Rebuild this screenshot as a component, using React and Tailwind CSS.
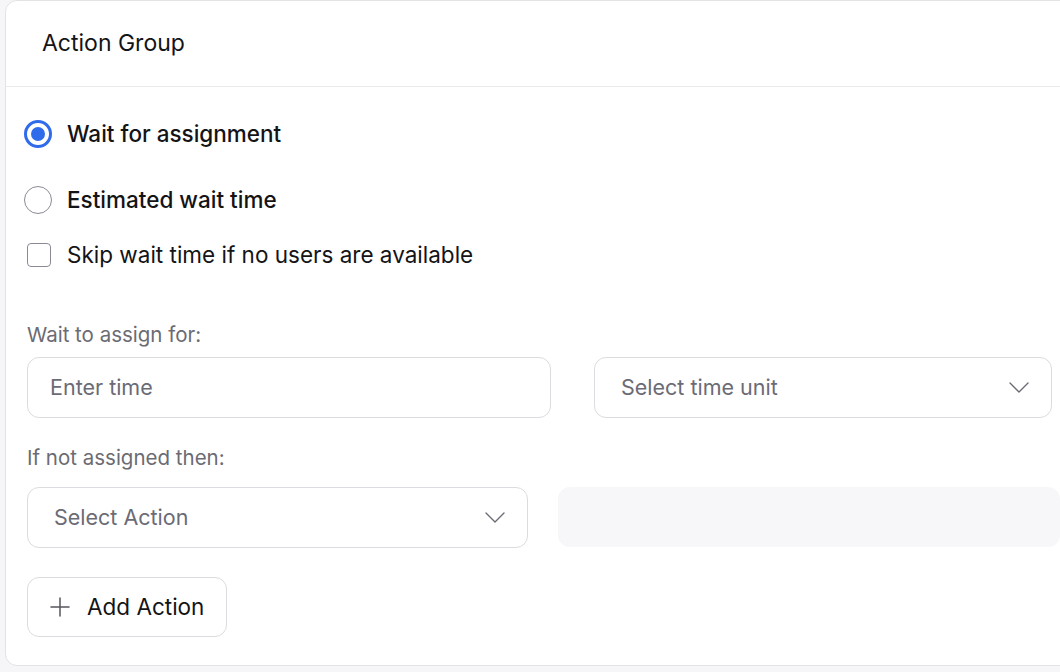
function Radio({ checked, label }) {
  return (
    <label className="flex h-[28px] items-center gap-[15px]">
      {checked ? (
        <span className="flex h-[28px] w-[28px] items-center justify-center rounded-full border-[3px] border-[#2f6bea]">
          <span className="h-[14px] w-[14px] rounded-full bg-[#2f6bea]" />
        </span>
      ) : (
        <span className="h-[28px] w-[28px] rounded-full border border-[#8a8a96] bg-white" />
      )}
      <span className="text-[22.5px] leading-none font-medium text-[#141416]">{label}</span>
    </label>
  );
}

function Chevron() {
  return (
    <svg width="20" height="11" viewBox="0 0 20 11" fill="none" className="text-[#6b6b76]">
      <path d="M1 1l9 9 9-9" stroke="currentColor" strokeWidth="1.4" strokeLinecap="round" strokeLinejoin="round" />
    </svg>
  );
}

function SelectBox({ placeholder, className }) {
  return (
    <div className={`flex h-[61px] items-center justify-between rounded-[12px] border border-[#dcdce0] bg-white pl-[26px] pr-[22px] ${className}`}>
      <span className="text-[21.5px] text-[#6b6b76]">{placeholder}</span>
      <Chevron />
    </div>
  );
}

export default function App() {
  return (
    <div className="h-[672px] w-[1060px] overflow-hidden bg-[#f6f6f8] pl-[5px]" style={{ fontFamily: 'Inter, "Noto Sans", sans-serif' }}>
      <div className="h-[666px] w-[1080px] rounded-[12px] border border-[#e3e3e6] bg-white">
        {/* header */}
        <div className="flex h-[86px] items-center border-b border-[#ebebee] pl-[36px]">
          <h2 className="text-[23px] text-[#141416]">Action Group</h2>
        </div>

        <div className="pl-[18px] pt-[33px]">
          <div className="flex flex-col gap-[38px]">
            <Radio checked label="Wait for assignment" />
            <Radio label="Estimated wait time" />
          </div>
          <label className="mt-[27px] flex h-[28px] items-center gap-[16px] pl-[3px]">
            <span className="h-[24px] w-[24px] rounded-[4px] border border-[#8a8a96] bg-white" />
            <span className="text-[22.5px] leading-none text-[#141416]">Skip wait time if no users are available</span>
          </label>
        </div>

        <div className="pl-[21px] pt-[52px]">
          <p className="text-[20.5px] leading-[28px] text-[#6b6b73]">Wait to assign for:</p>
          <div className="mt-[8px] flex gap-[43px]">
            <div className="flex h-[61px] w-[524px] items-center rounded-[12px] border border-[#dcdce0] bg-white pl-[22px]">
              <span className="text-[21.5px] text-[#6b6b76]">Enter time</span>
            </div>
            <SelectBox placeholder="Select time unit" className="w-[458px]" />
          </div>

          <p className="mt-[26px] text-[20.5px] leading-[28px] text-[#6b6b73]">If not assigned then:</p>
          <div className="mt-[15px] flex gap-[30px]">
            <SelectBox placeholder="Select Action" className="w-[501px]" />
            <div className="h-[60px] w-[502px] rounded-[12px] bg-[#f7f7f9]" />
          </div>

          <button className="mt-[29px] flex h-[60px] w-[200px] items-center gap-[17px] rounded-[12px] border border-[#dcdce0] bg-white pl-[22px]">
            <svg width="20" height="20" viewBox="0 0 20 20" fill="none" className="text-[#55555e]">
              <path d="M10 1v18M1 10h18" stroke="currentColor" strokeWidth="1.5" strokeLinecap="round" />
            </svg>
            <span className="text-[22.5px] text-[#141416]">Add Action</span>
          </button>
        </div>
      </div>
    </div>
  );
}
